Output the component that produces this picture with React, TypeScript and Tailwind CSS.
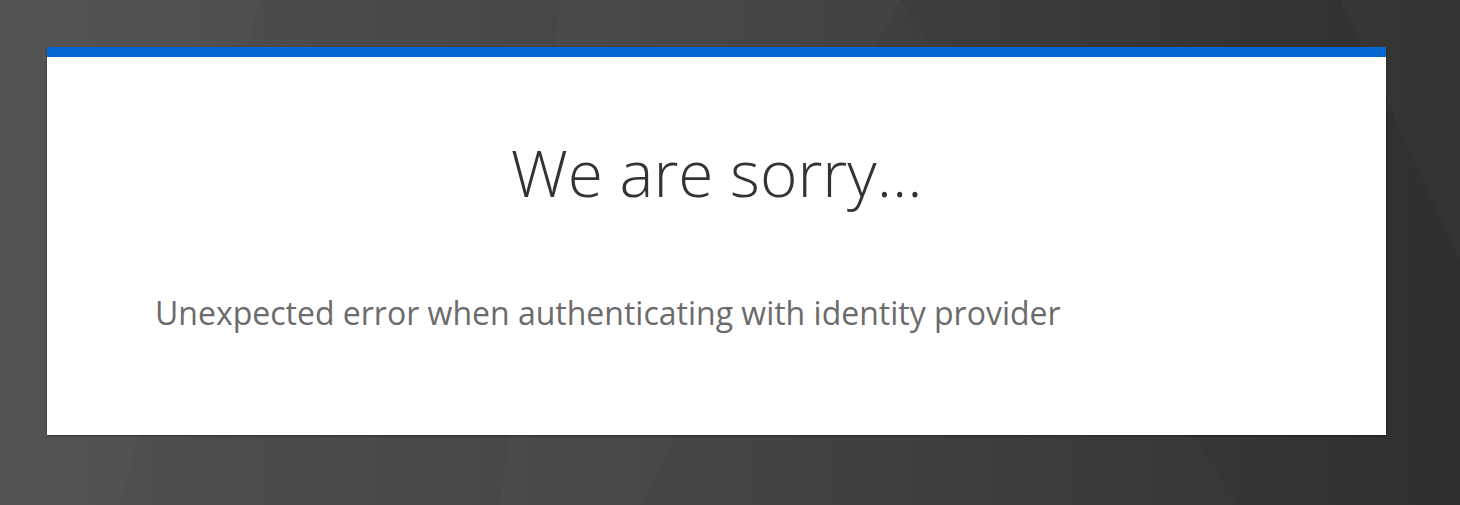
export default function App() {
  return (
    <div className="relative h-[505px] w-full overflow-hidden bg-gradient-to-r from-[#525252] via-[#444444] to-[#313131]">
      {/* faint polygon background */}
      <svg className="absolute inset-0 h-full w-full" viewBox="0 0 1460 505" preserveAspectRatio="none">
        <polygon points="0,0 260,0 120,505 0,505" fill="#ffffff" opacity="0.015" />
        <polygon points="260,0 560,0 500,505 120,505" fill="#000000" opacity="0.012" />
        <polygon points="560,0 900,0 640,505 500,505" fill="#ffffff" opacity="0.015" />
        <polygon points="900,0 1340,0 1460,260 1460,505 1240,505" fill="#000000" opacity="0.03" />
        <polygon points="1340,0 1460,0 1460,260" fill="#ffffff" opacity="0.012" />
      </svg>

      <div className="relative ml-[47px] mt-[47px] w-[1339px] h-[388px] border-t-[10px] border-[#0467d2] bg-white shadow-[0_1px_2px_rgba(0,0,0,0.4)]">
        <h1 className="pt-[84px] text-center text-[64px] leading-none font-light text-[#333333] font-['Open_Sans',sans-serif]">
          We are sorry...
        </h1>
        <p className="mt-[92px] pl-[108px] text-[32px] leading-none text-[#6b6b6b] font-['Open_Sans',sans-serif]">
          Unexpected error when authenticating with identity provider
        </p>
      </div>
    </div>
  );
}
